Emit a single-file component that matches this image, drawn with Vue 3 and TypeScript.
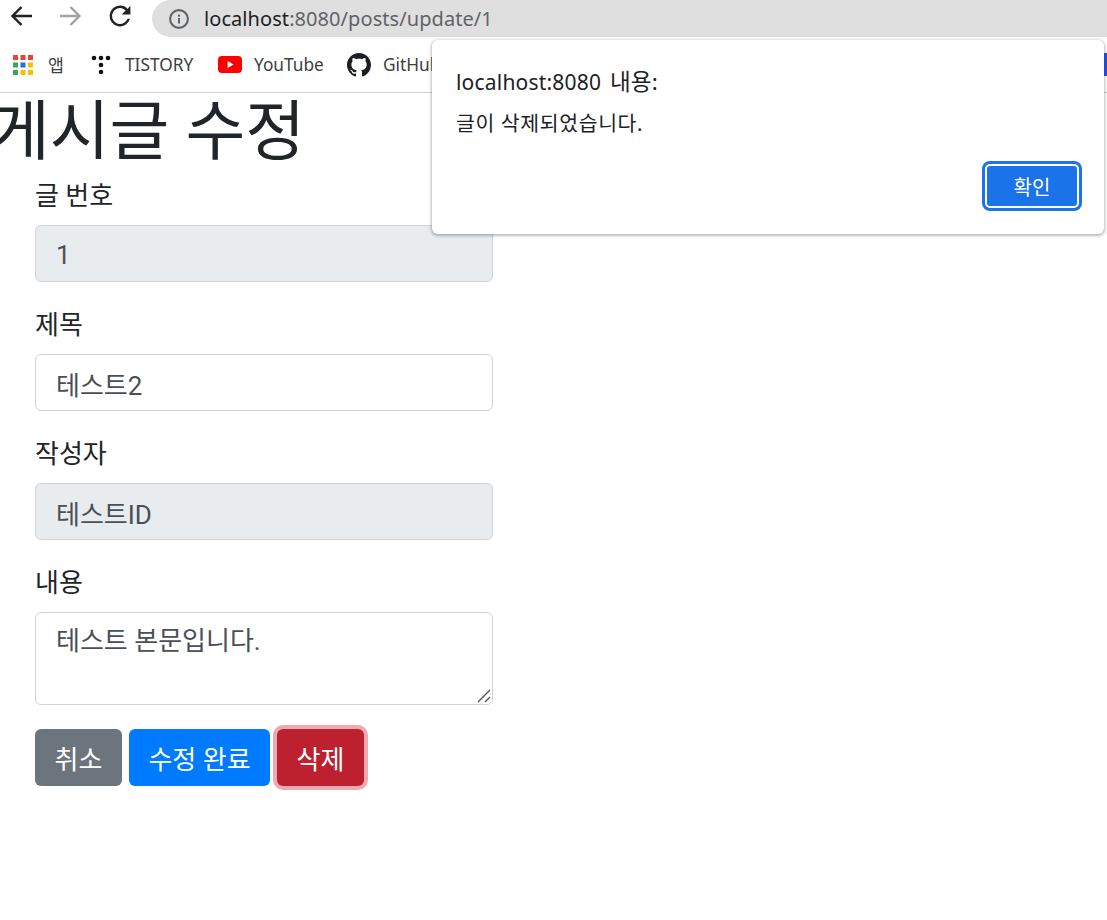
<script setup lang="ts">
interface Field { label: string; value: string; disabled: boolean }
const fields: Field[] = [
  { label: '글 번호', value: '1', disabled: true },
  { label: '제목', value: '테스트2', disabled: false },
  { label: '작성자', value: '테스트ID', disabled: true },
]
</script>

<template>
  <div class="window">
    <header class="chrome">
      <div class="toolbar">
        <button class="nav" aria-label="back">
          <svg width="28" height="28" viewBox="0 0 28 28" fill="none" stroke="#202124" stroke-width="2.4"><path d="M4 14h20M13.5 5L4.5 14l9 9" /></svg>
        </button>
        <button class="nav" aria-label="forward">
          <svg width="28" height="28" viewBox="0 0 28 28" fill="none" stroke="#a2a3a5" stroke-width="2.4"><path d="M4 14h20M14.5 5l9 9-9 9" /></svg>
        </button>
        <button class="nav" aria-label="reload">
          <svg width="28" height="28" viewBox="0 0 28 28"><path d="M21.6 6.9A10.4 10.4 0 0 0 14 3.6a10.4 10.4 0 1 0 10 13.2h-2.5A8 8 0 1 1 14 6c2.3 0 4.2.9 5.7 2.4L15.6 12.5H24.4V3.7z" fill="#202124" /></svg>
        </button>
        <div class="omnibox">
          <svg class="info" width="20" height="20" viewBox="0 0 20 20"><circle cx="10" cy="10" r="8.9" fill="none" stroke="#5f6368" stroke-width="2.1" /><rect x="9" y="9" width="2" height="5.5" fill="#5f6368" /><rect x="9" y="5.6" width="2" height="2" fill="#5f6368" /></svg>
          <span class="url"><span class="host">localhost</span>:8080/posts/update/1</span>
        </div>
      </div>
      <nav class="bookmarks">
        <a class="mark apps">
          <svg width="20" height="20" viewBox="0 0 20 20">
            <rect x="0" y="0" width="5" height="5" fill="#ea4335" /><rect x="7.5" y="0" width="5" height="5" fill="#ea4335" /><rect x="15" y="0" width="5" height="5" fill="#ea4335" />
            <rect x="0" y="7.5" width="5" height="5" fill="#34a853" /><rect x="7.5" y="7.5" width="5" height="5" fill="#1a73e8" /><rect x="15" y="7.5" width="5" height="5" fill="#fbbc04" />
            <rect x="0" y="15" width="5" height="5" fill="#34a853" /><rect x="7.5" y="15" width="5" height="5" fill="#fbbc04" /><rect x="15" y="15" width="5" height="5" fill="#fbbc04" />
          </svg>
          <span>앱</span>
        </a>
        <a class="mark tistory">
          <svg width="20" height="20" viewBox="0 0 20 20" fill="#111">
            <circle cx="3" cy="3" r="2.3" /><circle cx="10" cy="3" r="2.3" /><circle cx="17" cy="3" r="2.3" /><circle cx="10" cy="10" r="2.3" /><circle cx="10" cy="17" r="2.3" />
          </svg>
          <span>TISTORY</span>
        </a>
        <a class="mark youtube">
          <svg width="24" height="17" viewBox="0 0 24 17"><rect width="24" height="17" rx="4" fill="#f00" /><path d="M9.6 5v7l6-3.5z" fill="#fff" /></svg>
          <span>YouTube</span>
        </a>
        <a class="mark github">
          <svg width="24" height="24" viewBox="0 0 16 16"><path fill="#1b1f23" d="M8 0C3.58 0 0 3.58 0 8c0 3.54 2.29 6.53 5.47 7.59.4.07.55-.17.55-.38 0-.19-.01-.82-.01-1.49-2.01.37-2.53-.49-2.69-.94-.09-.23-.48-.94-.82-1.13-.28-.15-.68-.52-.01-.53.63-.01 1.08.58 1.23.82.72 1.21 1.87.87 2.33.66.07-.52.28-.87.51-1.07-1.78-.2-3.64-.89-3.64-3.95 0-.87.31-1.59.82-2.15-.08-.2-.36-1.02.08-2.12 0 0 .67-.21 2.2.82.64-.18 1.32-.27 2-.27s1.36.09 2 .27c1.53-1.04 2.2-.82 2.2-.82.44 1.1.16 1.92.08 2.12.51.56.82 1.27.82 2.15 0 3.07-1.87 3.75-3.65 3.95.29.25.54.73.54 1.48 0 1.07-.01 1.93-.01 2.2 0 .21.15.46.55.38A8.01 8.01 0 0 0 16 8c0-4.42-3.58-8-8-8z" /></svg>
          <span>GitHub</span>
        </a>
        <i class="edge-favicon"></i>
      </nav>
    </header>

    <main class="page">
      <h1 class="title">게시글 수정</h1>
      <form class="form" @submit.prevent>
        <div v-for="f in fields" :key="f.label" class="group">
          <label class="label">{{ f.label }}</label>
          <input class="control" :value="f.value" :disabled="f.disabled" />
        </div>
        <div class="group">
          <label class="label">내용</label>
          <div class="area-wrap">
            <textarea class="control area">테스트 본문입니다.</textarea>
            <svg class="grip" width="14" height="14" viewBox="0 0 14 14" fill="none" stroke="#555" stroke-width="1.4"><path d="M1 13L13 1M8 13l5-5" /></svg>
          </div>
        </div>
        <div class="actions">
          <button class="btn gray" type="button">취소</button>
          <button class="btn blue" type="button">수정 완료</button>
          <button class="btn red" type="button">삭제</button>
        </div>
      </form>
    </main>

    <div class="dialog" role="alertdialog">
      <div class="dlg-title">localhost:8080 <span class="kr">내용:</span></div>
      <div class="dlg-msg">글이 삭제되었습니다.</div>
      <div class="dlg-foot"><button class="ok" type="button">확인</button></div>
    </div>
  </div>
</template>

<style>
html, body { margin: 0; background: #fff; overflow: hidden; }
</style>

<style scoped>
.window {
  position: relative;
  width: 1107px;
  height: 920px;
  overflow: hidden;
  font-family: "Noto Sans", "Noto Sans CJK KR", sans-serif;
  color: #212529;
}
.chrome { height: 92px; border-bottom: 1px solid #cfcfcf; }
.toolbar { height: 38px; display: flex; align-items: flex-start; padding-left: 8px; }
.nav { width: 28px; height: 28px; padding: 0; border: 0; background: none; margin: 2px 20px 0 0; display: block; }
.nav svg { display: block; }
.nav:nth-of-type(2) { margin-right: 22px; }
.nav:nth-of-type(3) { margin-right: 18px; }
.omnibox {
  flex: 1;
  height: 37px;
  background: #dfdfdf;
  border-radius: 19px 0 0 19px;
  display: flex;
  align-items: center;
  padding-left: 17px;
}
.info { flex: none; }
.url { margin-left: 15px; font-size: 20px; letter-spacing: 0.07px; color: #5f6368; white-space: nowrap; }
.host { color: #202124; }
.bookmarks { position: relative; height: 54px; padding: 0 0 1px 13px; box-sizing: border-box; display: flex; align-items: center; font-size: 17.3px; color: #3c4043; }
.mark { display: flex; align-items: center; white-space: nowrap; }
.mark span { margin-left: 15px; }
.apps { width: 78px; }
.tistory { width: 127px; }
.youtube { width: 129px; }
.youtube span { margin-left: 12px; }
.github span { margin-left: 12px; }
.tistory span { margin-left: 14px; }
.edge-favicon { position: absolute; right: 0; top: 15px; width: 3px; height: 23px; background: #2a4be0; }

.page { padding-left: 35px; font-family: Roboto, "Noto Sans CJK KR", sans-serif; }
.title {
  margin: 0 0 9px -45px;
  padding-top: 3px;
  font-size: 65px;
  font-weight: 400;
  line-height: 72px;
  white-space: nowrap;
}
.form { width: 458px; }
.group { margin-bottom: 24px; }
.label { display: block; padding-top: 1px; font-size: 26px; line-height: 36px; margin-bottom: 11px; color: #212529; }
.control {
  display: block;
  width: 100%;
  height: 57px;
  box-sizing: border-box;
  padding: 10px 18px 8px 20px;
  border: 1px solid #ced4da;
  border-radius: 6px;
  background: #fff;
  color: #495057;
  font: inherit;
  font-size: 26px;
  line-height: 36px;
  outline: none;
  margin: 0;
}
.control:disabled { background: #e9ecef; opacity: 1; color: #495057; }
.area-wrap { position: relative; }
.area { height: 93px; resize: none; }
.grip { position: absolute; right: 2px; bottom: 2px; }
.actions { display: flex; gap: 7px; }
.btn {
  height: 57px;
  box-sizing: border-box;
  padding: 0;
  border: 1px solid transparent;
  border-radius: 6px;
  color: #fff;
  font: inherit;
  font-size: 26px;
}
.gray { width: 87px; background: #6c757d; }
.blue { width: 141px; background: #007bff; }
.red { width: 87px; background: #bd2130; box-shadow: 0 0 0 4px rgba(225, 83, 97, 0.5); }

.dialog {
  position: absolute;
  left: 432px;
  top: 40px;
  width: 672px;
  height: 194px;
  box-sizing: border-box;
  padding: 28px 24px 0;
  background: #fff;
  border-radius: 6px;
  box-shadow: 0 1px 3px 1px rgba(60, 64, 67, 0.35);
  color: #202124;
}
.dlg-title { font-size: 21px; line-height: 28px; word-spacing: 3px; letter-spacing: 0.2px; }
.kr { font-size: 22.5px; }
.dlg-msg { font-size: 20.5px; line-height: 26px; margin-top: 14px; letter-spacing: 0.6px; }
.dlg-foot { display: flex; justify-content: flex-end; margin-top: 28px; }
.ok {
  width: 94px;
  height: 44px;
  box-sizing: border-box;
  margin-right: 1px;
  border: 2px solid #fff;
  border-radius: 5px;
  background: #1a73e8;
  box-shadow: 0 0 0 3px #1a73e8;
  color: #fff;
  font: inherit;
  font-size: 20px;
}
</style>
